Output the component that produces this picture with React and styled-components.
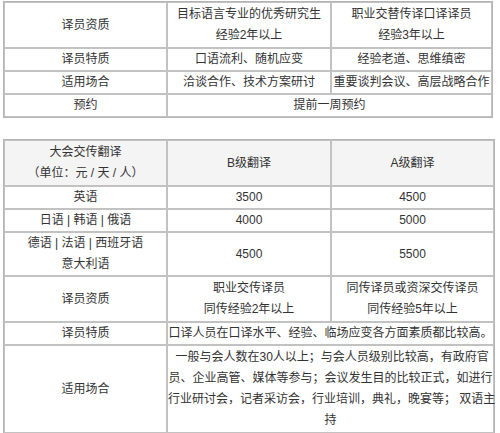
import React from "react";
import styled, { createGlobalStyle } from "styled-components";

const GlobalStyle = createGlobalStyle`
  html, body {
    margin: 0;
    padding: 0;
    background: #ffffff;
  }
`;

const Page = styled.div`
  padding: 1px 0 0 3px;
  display: flex;
  flex-direction: column;
  gap: 21px;
  font-family: "Liberation Sans", "Noto Sans CJK SC", sans-serif;
  font-size: 12px;
  color: #333333;
`;

const Table = styled.table`
  width: ${(p) => p.$width}px;
  table-layout: fixed;
  border-collapse: separate;
  border-spacing: 0;
  border: 1px solid #b4b4b4;
`;

const Row = styled.tr`
  background: ${(p) => (p.$head ? "#f4f4f4" : "#ffffff")};
`;

const Cell = styled.td`
  border: 1px solid #c2c2c2;
  padding: ${(p) => p.$pad || 0}px 0;
  line-height: 21px;
  text-align: center;
  vertical-align: middle;
  white-space: nowrap;
`;

const ServiceTable = () => (
  <Table $width={490}>
    <colgroup>
      <col style={{ width: 163 }} />
      <col style={{ width: 164 }} />
      <col />
    </colgroup>
    <tbody>
      <Row>
        <Cell $pad={1}>译员资质</Cell>
        <Cell $pad={1}>
          目标语言专业的优秀研究生
          <br />
          经验2年以上
        </Cell>
        <Cell $pad={1}>
          职业交替传译口译译员
          <br />
          经验3年以上
        </Cell>
      </Row>
      <Row>
        <Cell>译员特质</Cell>
        <Cell>口语流利、随机应变</Cell>
        <Cell>经验老道、思维缜密</Cell>
      </Row>
      <Row>
        <Cell>适用场合</Cell>
        <Cell>洽谈合作、技术方案研讨</Cell>
        <Cell>重要谈判会议、高层战略合作</Cell>
      </Row>
      <Row>
        <Cell>预约</Cell>
        <Cell colSpan={2}>提前一周预约</Cell>
      </Row>
    </tbody>
  </Table>
);

const PriceTable = () => (
  <Table $width={492}>
    <colgroup>
      <col style={{ width: 163 }} />
      <col style={{ width: 164 }} />
      <col />
    </colgroup>
    <tbody>
      <Row $head>
        <Cell $pad={1}>
          大会交传翻译
          <br />
          （单位：元 / 天 / 人）
        </Cell>
        <Cell $pad={1}>B级翻译</Cell>
        <Cell $pad={1}>A级翻译</Cell>
      </Row>
      <Row>
        <Cell>英语</Cell>
        <Cell>3500</Cell>
        <Cell>4500</Cell>
      </Row>
      <Row>
        <Cell>日语 | 韩语 | 俄语</Cell>
        <Cell>4000</Cell>
        <Cell>5000</Cell>
      </Row>
      <Row>
        <Cell>
          德语 | 法语 | 西班牙语
          <br />
          意大利语
        </Cell>
        <Cell>4500</Cell>
        <Cell>5500</Cell>
      </Row>
      <Row>
        <Cell $pad={1}>译员资质</Cell>
        <Cell $pad={1}>
          职业交传译员
          <br />
          同传经验2年以上
        </Cell>
        <Cell $pad={1}>
          同传译员或资深交传译员
          <br />
          同传经验5年以上
        </Cell>
      </Row>
      <Row>
        <Cell>译员特质</Cell>
        <Cell colSpan={2}>口译人员在口译水平、经验、临场应变各方面素质都比较高。</Cell>
      </Row>
      <Row>
        <Cell $pad={1}>适用场合</Cell>
        <Cell colSpan={2} $pad={1}>
          &nbsp;一般与会人数在30人以上；与会人员级别比较高，有政府官
          <br />
          员、企业高管、媒体等参与；会议发生目的比较正式，如进行
          <br />
          行业研讨会，记者采访会，行业培训，典礼，晚宴等； 双语主
          <br />
          持
        </Cell>
      </Row>
    </tbody>
  </Table>
);

const App = () => (
  <>
    <GlobalStyle />
    <Page>
      <ServiceTable />
      <PriceTable />
    </Page>
  </>
);

export default App;
